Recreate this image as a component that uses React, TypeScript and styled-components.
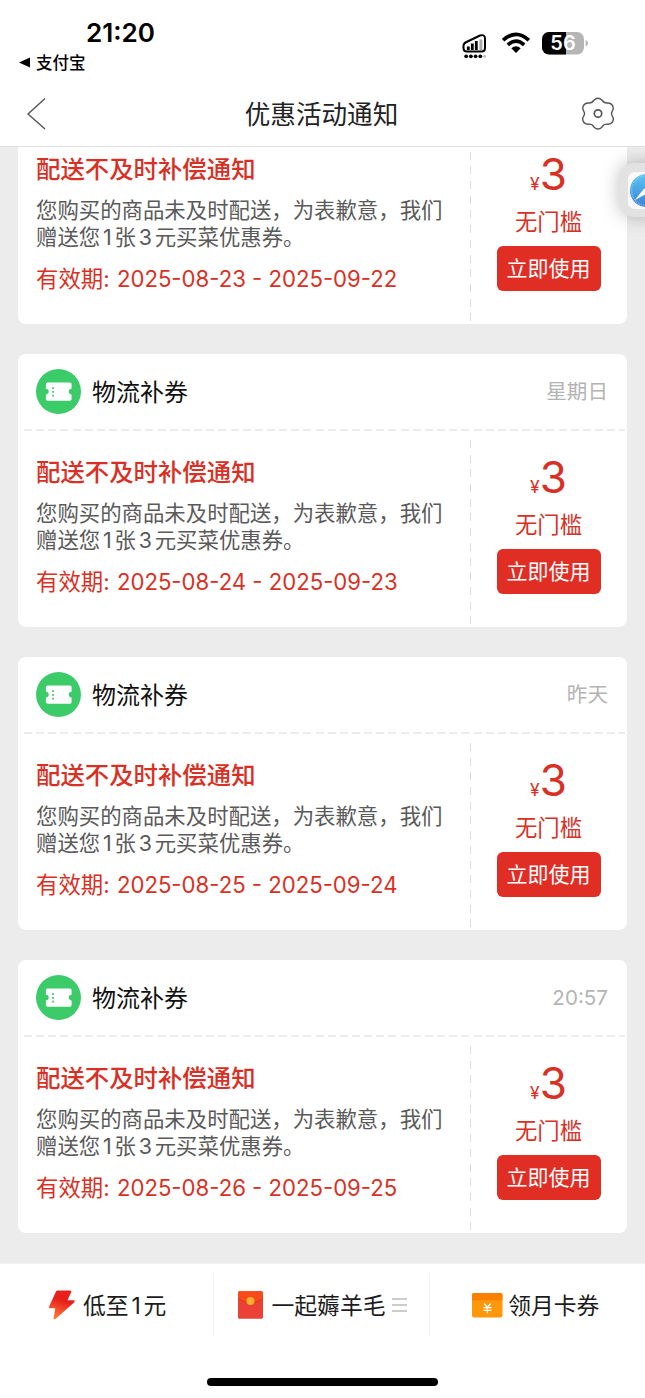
import React from "react";
import styled, { createGlobalStyle } from "styled-components";

const GlobalStyle = createGlobalStyle`
  * { box-sizing: border-box; }
  body {
    margin: 0;
    background: #ececec;
    font-family: Inter, "Noto Sans CJK SC", sans-serif;
    -webkit-font-smoothing: antialiased;
  }
`;

const red = "#d93025";

const Screen = styled.div`
  position: relative;
  display: flex;
  flex-direction: column;
  width: 645px;
  height: 1398px;
  overflow: hidden;
  background: #ececec;
`;

const StatusBar = styled.header`
  display: flex;
  justify-content: space-between;
  height: 81px;
  padding: 0 57px 0 19px;
  background: #fff;
`;

const ClockBlock = styled.div`
  display: flex;
  flex-direction: column;
  padding-top: 18px;
`;

const Clock = styled.div`
  padding-left: 67px;
  font-size: 26.1px;
  font-weight: 600;
  line-height: 30px;
  white-space: nowrap;
  color: #000;
`;

const BackToApp = styled.div`
  display: flex;
  align-items: center;
  gap: 6px;
  height: 28px;
  font-size: 16.5px;
  font-weight: 500;
  color: #000;
`;

const StatusIcons = styled.div`
  display: flex;
  align-items: flex-start;
  padding-top: 31px;
`;

const NavBar = styled.nav`
  display: flex;
  align-items: center;
  justify-content: space-between;
  height: 66px;
  padding: 0 30px 0 26px;
  border-bottom: 1px solid #dedede;
  background: #fff;
`;

const NavTitle = styled.h1`
  margin: 0;
  padding: 2px 0 0 16px;
  font-size: 25.6px;
  font-weight: 400;
  line-height: 36px;
  color: #222;
`;

const Feed = styled.main`
  display: flex;
  flex: 1;
  min-height: 0;
  flex-direction: column;
  justify-content: flex-end;
  gap: 30px;
  padding: 0 18px 30px;
  overflow: hidden;
`;

const Card = styled.article`
  flex: none;
  height: 273px;
  border-radius: 8px;
  background: #fff;
`;

const CardHeader = styled.div`
  display: flex;
  align-items: center;
  height: 75px;
  padding: 0 19px 0 18px;
`;

const CardName = styled.h2`
  flex: 1;
  margin: 0 0 0 11px;
  padding-top: 2px;
  font-size: 24px;
  font-weight: 400;
  line-height: 34px;
  color: #111;
`;

const CardTime = styled.time`
  padding-top: 1px;
  font-size: 20.6px;
  line-height: 30px;
  color: #b4b4b4;
`;

const RowDivider = styled.div`
  height: 2px;
  margin: 0 2px 0 6px;
  background: repeating-linear-gradient(90deg, #ececec 0 8px, transparent 8px 12.15px);
`;

const CardBody = styled.div`
  display: flex;
  height: 196px;
`;

const Details = styled.div`
  width: 452px;
  padding: 24px 0 0 18px;
`;

const NoticeTitle = styled.h3`
  margin: 0;
  font-size: 24.4px;
  font-weight: 500;
  line-height: 34px;
  color: ${red};
`;

const NoticeText = styled.p`
  margin: 11px 0 0;
  font-size: 21.4px;
  line-height: 27px;
  white-space: nowrap;
  color: #5a5a5a;
`;

const Digit = styled.span`
  padding: 0 2.8px;
`;

const Validity = styled.div`
  margin-top: 12px;
  font-size: 22.4px;
  line-height: 32px;
  white-space: nowrap;
  color: ${red};
`;

const DateRange = styled.span`
  margin-left: 1px;
  font-size: 22.15px;
`;

const ColumnDivider = styled.div`
  width: 1px;
  margin: 9px 0 3px;
  background: repeating-linear-gradient(180deg, #dedede 0 8px, transparent 8px 14.7px);
`;

const Offer = styled.div`
  display: flex;
  flex: 1;
  flex-direction: column;
  align-items: center;
  padding: 20px 1px 0 0;
  color: ${red};
`;

const Amount = styled.div`
  display: flex;
  align-items: baseline;
  height: 52px;
  font-size: 44px;
  line-height: 52px;
`;

const Currency = styled.span`
  font-size: 17.5px;
`;

const Condition = styled.div`
  margin-top: 6px;
  font-size: 22.4px;
  line-height: 32px;
`;

const UseButton = styled.button`
  width: 104px;
  height: 45px;
  margin-top: 8px;
  padding: 0;
  border: 0;
  border-radius: 6px;
  background: #e02e24;
  font: 400 21px/45px Inter, "Noto Sans CJK SC", sans-serif;
  color: #fff;
`;

const Footer = styled.footer`
  display: flex;
  flex-direction: column;
  align-items: center;
  height: 135px;
  border-top: 1px solid #f2f2f2;
  background: #fff;
`;

const TabRow = styled.div`
  display: flex;
  width: 100%;
  height: 84px;
  padding-top: 9px;
`;

const Tab = styled.button<{ $divided?: boolean; $left?: number; $right?: number }>`
  display: flex;
  flex: 1 1 0;
  align-items: center;
  justify-content: center;
  height: 64px;
  padding: 0 ${(p) => p.$right ?? 0}px 0 ${(p) => p.$left ?? 0}px;
  border: 0;
  border-right: ${(p) => (p.$divided ? "1px solid #f2f2f2" : "0")};
  background: none;
  font: 400 22.8px/32px Inter, "Noto Sans CJK SC", sans-serif;
  color: #1c1c1c;
`;

const TabLabel = styled.span<{ $gap: number }>`
  margin: 2px 0 0 ${(p) => p.$gap}px;
  white-space: nowrap;
`;

const HomeIndicator = styled.div`
  width: 231px;
  height: 8px;
  margin-top: 30px;
  border-radius: 4px;
  background: #000;
`;

const FloatingApp = styled.div`
  position: absolute;
  top: 163px;
  right: -28px;
  display: flex;
  align-items: center;
  justify-content: center;
  width: 54px;
  height: 54px;
  border-radius: 15px;
  background: #e2e2e2;
  box-shadow: 0 0 18px rgba(0, 0, 0, 0.25);
`;

const SignalIcon = () => (
  <svg width="24" height="28" viewBox="0 0 24 28">
    <path d="M4.5 11 L18 4.5 Q23 3 23 7.5 V17 Q23 20.5 19.5 20.5 H5 Q1.5 20.5 1.5 17 V14.5 Q1.5 12.3 4.5 11Z" fill="#fff" stroke="#000" strokeWidth="2" />
    <path d="M6.3 19V15.5M10.3 19V12.5M14.3 19V10" stroke="#000" strokeWidth="2.8" />
    <path d="M18.9 19V8.5" stroke="#aaa" strokeWidth="3" />
    {[4.2, 8.9, 13.6, 18.3].map((x) => <circle key={x} cx={x} cy="25.3" r="1.9" />)}
    <circle cx="22.5" cy="25.3" r="1.4" fill="#bbb" />
  </svg>
);

const WifiIcon = () => (
  <svg width="28" height="22" viewBox="0 0 28 22" style={{ marginLeft: 16, marginTop: 1 }}>
    <g fill="none" stroke="#000" strokeWidth="3.6">
      <path d="M1.2 8.2 Q14 -3.6 26.8 8.2" />
      <path d="M5.8 12.9 Q14 5.4 22.2 12.9" />
    </g>
    <path d="M9.3 16.2 Q14 12.2 18.7 16.2 L14 21Z" />
  </svg>
);

const BatteryIcon = () => (
  <svg width="47" height="24" viewBox="0 0 47 24" style={{ marginLeft: 11 }}>
    <defs>
      <clipPath id="battery"><rect x="1" y="1" width="42" height="22.6" rx="7" /></clipPath>
    </defs>
    <g clipPath="url(#battery)">
      <rect width="47" height="24" fill="#b5b5b5" />
      <rect width="25" height="24" />
    </g>
    <path d="M44.6 9 Q47 10 47 12.3 T44.6 15.6Z" fill="#b5b5b5" />
    <text x="22" y="19.4" textAnchor="middle" fontSize="20" fontWeight="600" fontFamily="Inter" fill="#fff">56</text>
  </svg>
);

const BackIcon = () => (
  <svg width="20" height="34" viewBox="0 0 20 34" fill="none" stroke="#555" strokeWidth="1.4">
    <path d="M19 1.5 L2 17 L19 32" />
  </svg>
);

const SettingsIcon = () => (
  <svg width="34" height="34" viewBox="0 0 34 34" fill="none" stroke="#555" strokeWidth="1.4" strokeLinejoin="round">
    <path d="M12.9 3.2 Q17 -.6 21.1 3.2 Q22.8 6.3 26.3 6 Q31.8 6 32.3 11.2 Q32.1 12.8 31.2 14.3 Q29.8 16.6 31.2 18.9 Q32.3 20.4 32.4 22.2 Q31.6 27.5 26.3 27.2 Q22.8 26.9 21.1 29.9 Q17 34.2 12.9 29.9 Q11.2 26.9 7.7 27.2 Q2.4 27.5 1.6 22.2 Q1.7 20.4 2.8 18.9 Q4.2 16.6 2.8 14.3 Q1.9 12.8 1.7 11.2 Q2.2 6 7.7 6 Q11.2 6.3 12.9 3.2Z" />
    <circle cx="17" cy="16.5" r="3.7" strokeWidth="1.7" />
  </svg>
);

const CouponIcon = () => (
  <svg width="45" height="45" viewBox="0 0 45 45">
    <circle cx="22.5" cy="22.5" r="22.5" fill="#3bcb68" />
    <path d="M11.5 13.5 H34 Q35.6 13.5 35.6 15 V19.8 A2.8 2.8 0 0 0 35.6 25.4 V30 Q35.6 31.7 34 31.7 H11.5 Q9.9 31.7 9.9 30 V25.4 A2.8 2.8 0 0 0 9.9 19.8 V15 Q9.9 13.5 11.5 13.5Z" fill="#fff" />
    <path d="M17 18.3V28" stroke="#3bcb68" strokeWidth="1.8" strokeDasharray="1.8 1.9" />
  </svg>
);

const BoltIcon = () => (
  <svg width="28" height="32" viewBox="0 0 28 32">
    <defs>
      <linearGradient id="bolt" x1=".6" y1="0" x2=".3" y2="1">
        <stop offset=".35" stopColor="#e8201c" />
        <stop offset="1" stopColor="#ff8038" />
      </linearGradient>
    </defs>
    <path d="M9.5 1.5 H22 Q24 1.5 23.2 3.2 L19.5 11.3 H25.8 Q27.5 11.5 26.3 13.2 L7.5 30 Q5.5 31.2 5.6 29 L7.3 19.2 H2 Q.5 19 1.1 17.4 L8 2.6 Q8.5 1.5 9.5 1.5Z" fill="url(#bolt)" />
  </svg>
);

const EnvelopeIcon = () => (
  <svg width="25" height="28" viewBox="0 0 25 28">
    <rect width="25" height="27.5" y=".3" rx="1.6" fill="#ea4035" />
    <path d="M0 7.5 V2 Q0 .3 1.6 .3 H23.4 Q25 .3 25 2 V7.5 Q12.5 16 0 7.5Z" fill="#f84b1c" />
    <path d="M0 7.5 Q12.5 16 25 7.5" fill="none" stroke="#dc3323" strokeWidth=".8" />
    <circle cx="12.5" cy="10" r="4" fill="#ffae30" />
  </svg>
);

const CardIcon = () => (
  <svg width="31" height="25" viewBox="0 0 31 25">
    <rect width="30.5" height="24.5" rx="2" fill="#ff970b" />
    <path d="M0 7.3V2Q0 0 2 0H28.5Q30.5 0 30.5 2V7.3Z" fill="#fa8000" />
    <path d="M12 10.5 L15.4 14.3 L18.8 10.5M11.3 14.6H19.5M11.3 17.4H19.5M15.4 14.3V20.5" fill="none" stroke="#fff" strokeWidth="1.3" />
  </svg>
);

const MenuIcon = () => (
  <svg width="15" height="16" viewBox="0 0 15 16" style={{ marginLeft: 7 }}>
    <path d="M0 2H15M0 8H15M0 14H15" stroke="#ccc" strokeWidth="2" />
  </svg>
);

const CompassIcon = () => (
  <svg width="37" height="37" viewBox="0 0 38 38">
    <defs>
      <linearGradient id="compass" x1="0" y1="0" x2="0" y2="1">
        <stop stopColor="#5cc6f2" />
        <stop offset="1" stopColor="#3a80d8" />
      </linearGradient>
    </defs>
    <rect width="38" height="38" rx="7" fill="#f8f8f8" />
    <circle cx="19" cy="19" r="17" fill="url(#compass)" />
    <circle cx="19" cy="19" r="15.3" fill="none" stroke="#a6daf5" strokeWidth="1.4" strokeDasharray=".6 1.2" />
    <path d="M31 8 L17 16.5 L21 21Z" fill="#ec5046" />
    <path d="M7 29 L17 16.5 L21 21Z" fill="#fff" />
  </svg>
);

const notices = [
  { time: "星期六", from: "2025-08-23", to: "2025-09-22" },
  { time: "星期日", from: "2025-08-24", to: "2025-09-23" },
  { time: "昨天", from: "2025-08-25", to: "2025-09-24" },
  { time: "20:57", from: "2025-08-26", to: "2025-09-25" },
];

const NoticeCard = ({ time, from, to }: (typeof notices)[number]) => (
  <Card>
    <CardHeader>
      <CouponIcon />
      <CardName>物流补券</CardName>
      <CardTime>{time}</CardTime>
    </CardHeader>
    <RowDivider />
    <CardBody>
      <Details>
        <NoticeTitle>配送不及时补偿通知</NoticeTitle>
        <NoticeText>
          您购买的商品未及时配送，为表歉意，我们
          <br />
          赠送您<Digit>1</Digit>张<Digit>3</Digit>元买菜优惠券。
        </NoticeText>
        <Validity>有效期: <DateRange>{from} - {to}</DateRange></Validity>
      </Details>
      <ColumnDivider />
      <Offer>
        <Amount><Currency>¥</Currency>3</Amount>
        <Condition>无门槛</Condition>
        <UseButton>立即使用</UseButton>
      </Offer>
    </CardBody>
  </Card>
);

export default function App() {
  return (
    <Screen>
      <GlobalStyle />
      <StatusBar>
        <ClockBlock>
          <Clock>21:20</Clock>
          <BackToApp>
            <svg width="11" height="11" viewBox="0 0 11 11"><path d="M0 5.5L11 .5V10.5Z" /></svg>
            支付宝
          </BackToApp>
        </ClockBlock>
        <StatusIcons>
          <SignalIcon />
          <WifiIcon />
          <BatteryIcon />
        </StatusIcons>
      </StatusBar>
      <NavBar>
        <BackIcon />
        <NavTitle>优惠活动通知</NavTitle>
        <SettingsIcon />
      </NavBar>
      <Feed>
        {notices.map((n) => <NoticeCard key={n.from} {...n} />)}
      </Feed>
      <Footer>
        <TabRow>
          <Tab $divided $left={1}><BoltIcon /><TabLabel $gap={7}>低至<Digit>1</Digit>元</TabLabel></Tab>
          <Tab $divided $left={2}><EnvelopeIcon /><TabLabel $gap={9}>一起薅羊毛</TabLabel><MenuIcon /></Tab>
          <Tab $right={3}><CardIcon /><TabLabel $gap={5}>领月卡券</TabLabel></Tab>
        </TabRow>
        <HomeIndicator />
      </Footer>
      <FloatingApp><CompassIcon /></FloatingApp>
    </Screen>
  );
}
